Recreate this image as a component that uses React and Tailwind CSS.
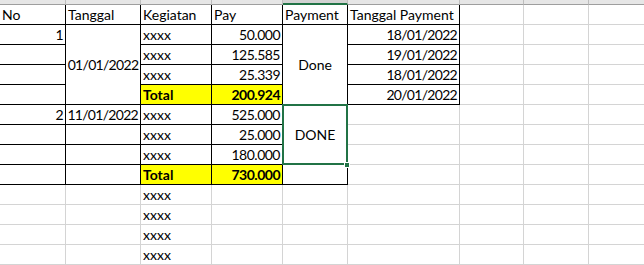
const colStart = {
  1: 'col-start-1', 2: 'col-start-2', 3: 'col-start-3', 4: 'col-start-4', 5: 'col-start-5',
  6: 'col-start-6', 7: 'col-start-7', 8: 'col-start-8', 9: 'col-start-9',
};
const rowStart = {
  1: 'row-start-1', 2: 'row-start-2', 3: 'row-start-3', 4: 'row-start-4', 5: 'row-start-5',
  6: 'row-start-6', 7: 'row-start-7', 8: 'row-start-8', 9: 'row-start-9', 10: 'row-start-10',
  11: 'row-start-11', 12: 'row-start-12', 13: 'row-start-13', 14: 'row-start-14',
};
const rowSpan = { 1: 'row-span-1', 3: 'row-span-3', 4: 'row-span-4' };

// cells inside the bordered table: [col, row, text, align, extra]
const tableCells = [
  [1, 1, 'No', 'left'], [2, 1, 'Tanggal', 'left'], [3, 1, 'Kegiatan', 'left'], [4, 1, 'Pay', 'left'],
  [5, 1, 'Payment', 'left'], [6, 1, 'Tanggal Payment', 'left'],
  [1, 2, '1', 'right'], [2, 2, '01/01/2022', 'center', { span: 4 }], [3, 2, 'xxxx', 'left'],
  [4, 2, '50.000', 'right'], [5, 2, 'Done', 'center', { span: 4 }], [6, 2, '18/01/2022', 'right'],
  [1, 3, '', 'left'], [3, 3, 'xxxx', 'left'], [4, 3, '125.585', 'right'], [6, 3, '19/01/2022', 'right'],
  [1, 4, '', 'left'], [3, 4, 'xxxx', 'left'], [4, 4, '25.339', 'right'], [6, 4, '18/01/2022', 'right'],
  [1, 5, '', 'left'], [3, 5, 'Total', 'left', { total: true }], [4, 5, '200.924', 'right', { total: true }],
  [6, 5, '20/01/2022', 'right'],
  [1, 6, '2', 'right'], [2, 6, '11/01/2022', 'right'], [3, 6, 'xxxx', 'left'], [4, 6, '525.000', 'right'],
  [5, 6, 'DONE', 'center', { span: 3 }],
  [1, 7, '', 'left'], [2, 7, '', 'left'], [3, 7, 'xxxx', 'left'], [4, 7, '25.000', 'right'],
  [1, 8, '', 'left'], [2, 8, '', 'left'], [3, 8, 'xxxx', 'left'], [4, 8, '180.000', 'right'],
  [1, 9, '', 'left'], [2, 9, '', 'left'], [3, 9, 'Total', 'left', { total: true }],
  [4, 9, '730.000', 'right', { total: true }], [5, 9, '', 'left'],
];

function buildCells() {
  const taken = new Set();
  const cells = [];
  tableCells.forEach(([c, r, text, align, extra = {}]) => {
    const span = extra.span || 1;
    for (let i = 0; i < span; i++) taken.add(`${c}-${r + i}`);
    cells.push({ c, r, text, align, span, total: extra.total, black: true });
  });
  const loose = { '3-10': 'xxxx', '3-11': 'xxxx', '3-12': 'xxxx', '3-13': 'xxxx' };
  for (let r = 1; r <= 14; r++) {
    for (let c = 1; c <= 9; c++) {
      if (taken.has(`${c}-${r}`)) continue;
      cells.push({ c, r, text: loose[`${c}-${r}`] || '', align: 'left', span: 1, black: false });
    }
  }
  return cells;
}

function Cell({ cell }) {
  const alignCls =
    cell.align === 'center'
      ? 'items-center justify-center'
      : cell.align === 'right'
        ? 'items-end justify-end pr-[2px]'
        : 'items-end justify-start pl-[2px]';
  // Lato digits run wider than Calibri's, so tighten dates a bit more than amounts
  const isDate = cell.text.includes('/');
  const isNum = /^[\d.]+$/.test(cell.text);
  const track = isDate ? 'tracking-[-0.7px]' : isNum ? 'tracking-[-0.5px]' : '';
  return (
    <div
      className={`${colStart[cell.c]} ${rowStart[cell.r]} ${rowSpan[cell.span]} flex whitespace-nowrap border-r border-b leading-[18px] ${alignCls} ${track} ${
        cell.black ? 'border-black' : 'border-[#d4d4d4]'
      } ${cell.total ? 'bg-[#ffff00] font-bold' : 'bg-white'}`}
    >
      {cell.text}
    </div>
  );
}

export default function App() {
  const cells = buildCells();
  const widths = [66, 75, 71, 71, 65, 112, 64, 65, 64];

  return (
    <div className="h-[265px] w-[644px] overflow-hidden bg-white text-[14px] text-black" style={{ fontFamily: 'Lato, "Open Sans", sans-serif' }}>
      {/* column header strip */}
      <div className="grid h-[5px] grid-cols-[66px_75px_71px_71px_65px_112px_64px_65px_64px]">
        {widths.map((w, i) => (
          <div
            key={i}
            className={
              i === 4
                ? 'border-r border-b-2 border-r-[#bdbdbd] border-b-[#217346] bg-[#d2d2d2]'
                : 'border-r border-b border-r-[#bdbdbd] border-b-[#9e9e9e] bg-[#e6e6e6]'
            }
          />
        ))}
      </div>

      <div className="grid grid-cols-[66px_75px_71px_71px_65px_112px_64px_65px_64px] grid-rows-[repeat(14,20px)]">
        {cells.map(cell => (
          <Cell key={`${cell.c}-${cell.r}`} cell={cell} />
        ))}

        {/* selected range E6:E8 */}
        <div className="relative col-start-5 row-start-6 row-span-3">
          <div className="absolute left-[-1px] top-[-1px] h-[61px] w-[66px] border-2 border-[#217346]" />
          <div className="absolute right-[-2px] bottom-[-3px] h-[6px] w-[6px] border border-white bg-[#217346]" />
        </div>
      </div>
    </div>
  );
}
